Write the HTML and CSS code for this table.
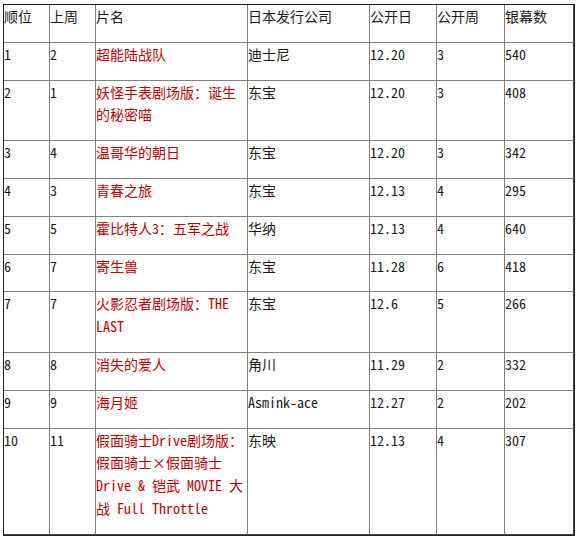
FILE: index.html
```html
<!DOCTYPE html>
<html lang="zh-CN">
<head>
<meta charset="utf-8">
<title>日本票房排行</title>
<link rel="stylesheet" href="styles.css">
</head>
<body>
<table class="rank">
  <tr>
    <td class="c1">顺位</td><td class="c2">上周</td><td class="c3">片名</td><td class="c4">日本发行公司</td><td class="c5">公开日</td><td class="c6">公开周</td><td class="c7">银幕数</td>
  </tr>
  <tr><td>1</td><td>2</td><td class="title">超能陆战队</td><td>迪士尼</td><td>12.20</td><td>3</td><td>540</td></tr>
  <tr><td>2</td><td>1</td><td class="title">妖怪手表剧场版：诞生的秘密喵</td><td>东宝</td><td>12.20</td><td>3</td><td>408</td></tr>
  <tr><td>3</td><td>4</td><td class="title">温哥华的朝日</td><td>东宝</td><td>12.20</td><td>3</td><td>342</td></tr>
  <tr><td>4</td><td>3</td><td class="title">青春之旅</td><td>东宝</td><td>12.13</td><td>4</td><td>295</td></tr>
  <tr><td>5</td><td>5</td><td class="title">霍比特人3：五军之战</td><td>华纳</td><td>12.13</td><td>4</td><td>640</td></tr>
  <tr><td>6</td><td>7</td><td class="title">寄生兽</td><td>东宝</td><td>11.28</td><td>6</td><td>418</td></tr>
  <tr><td>7</td><td>7</td><td class="title">火影忍者剧场版：THE LAST</td><td>东宝</td><td>12.6</td><td>5</td><td>266</td></tr>
  <tr><td>8</td><td>8</td><td class="title">消失的爱人</td><td>角川</td><td>11.29</td><td>2</td><td>332</td></tr>
  <tr><td>9</td><td>9</td><td class="title">海月姬</td><td>Asmink-ace</td><td>12.27</td><td>2</td><td>202</td></tr>
  <tr><td>10</td><td>11</td><td class="title">假面骑士Drive剧场版：假面骑士×假面骑士Drive &amp; 铠武 MOVIE 大战 Full Throttle</td><td>东映</td><td>12.13</td><td>4</td><td>307</td></tr>
</table>
</body>
</html>
```

FILE: styles.css
```css
html, body {
  background: #ffffff;
}
body {
  margin: 4px 0 0 3px;
  font-family: "Noto Sans Mono CJK SC", "Noto Sans CJK SC", "Liberation Mono", monospace;
  font-size: 14px;
  color: #1a1a1a;
}
.rank {
  border-collapse: separate;
  border-spacing: 0;
  border: 1px solid #222222;
  table-layout: fixed;
  width: 572px;
}
.rank td {
  border-right: 1px solid #808080;
  border-bottom: 1px solid #808080;
  padding: 0 0 14px 0;
  line-height: 22.8px;
  vertical-align: top;
  text-align: left;
  word-break: normal;
  overflow-wrap: break-word;
}
.rank tr:last-child td {
  border-bottom-color: #444444;
}
.rank td:last-child {
  border-right-color: #444444;
}
.rank .c1 { width: 45px; }
.rank .c2 { width: 45px; }
.rank .c3 { width: 151px; }
.rank .c4 { width: 121px; }
.rank .c5 { width: 66px; }
.rank .c6 { width: 67px; }
.rank .c7 { width: 68px; }
.rank .title {
  color: #c00000;
}
```
